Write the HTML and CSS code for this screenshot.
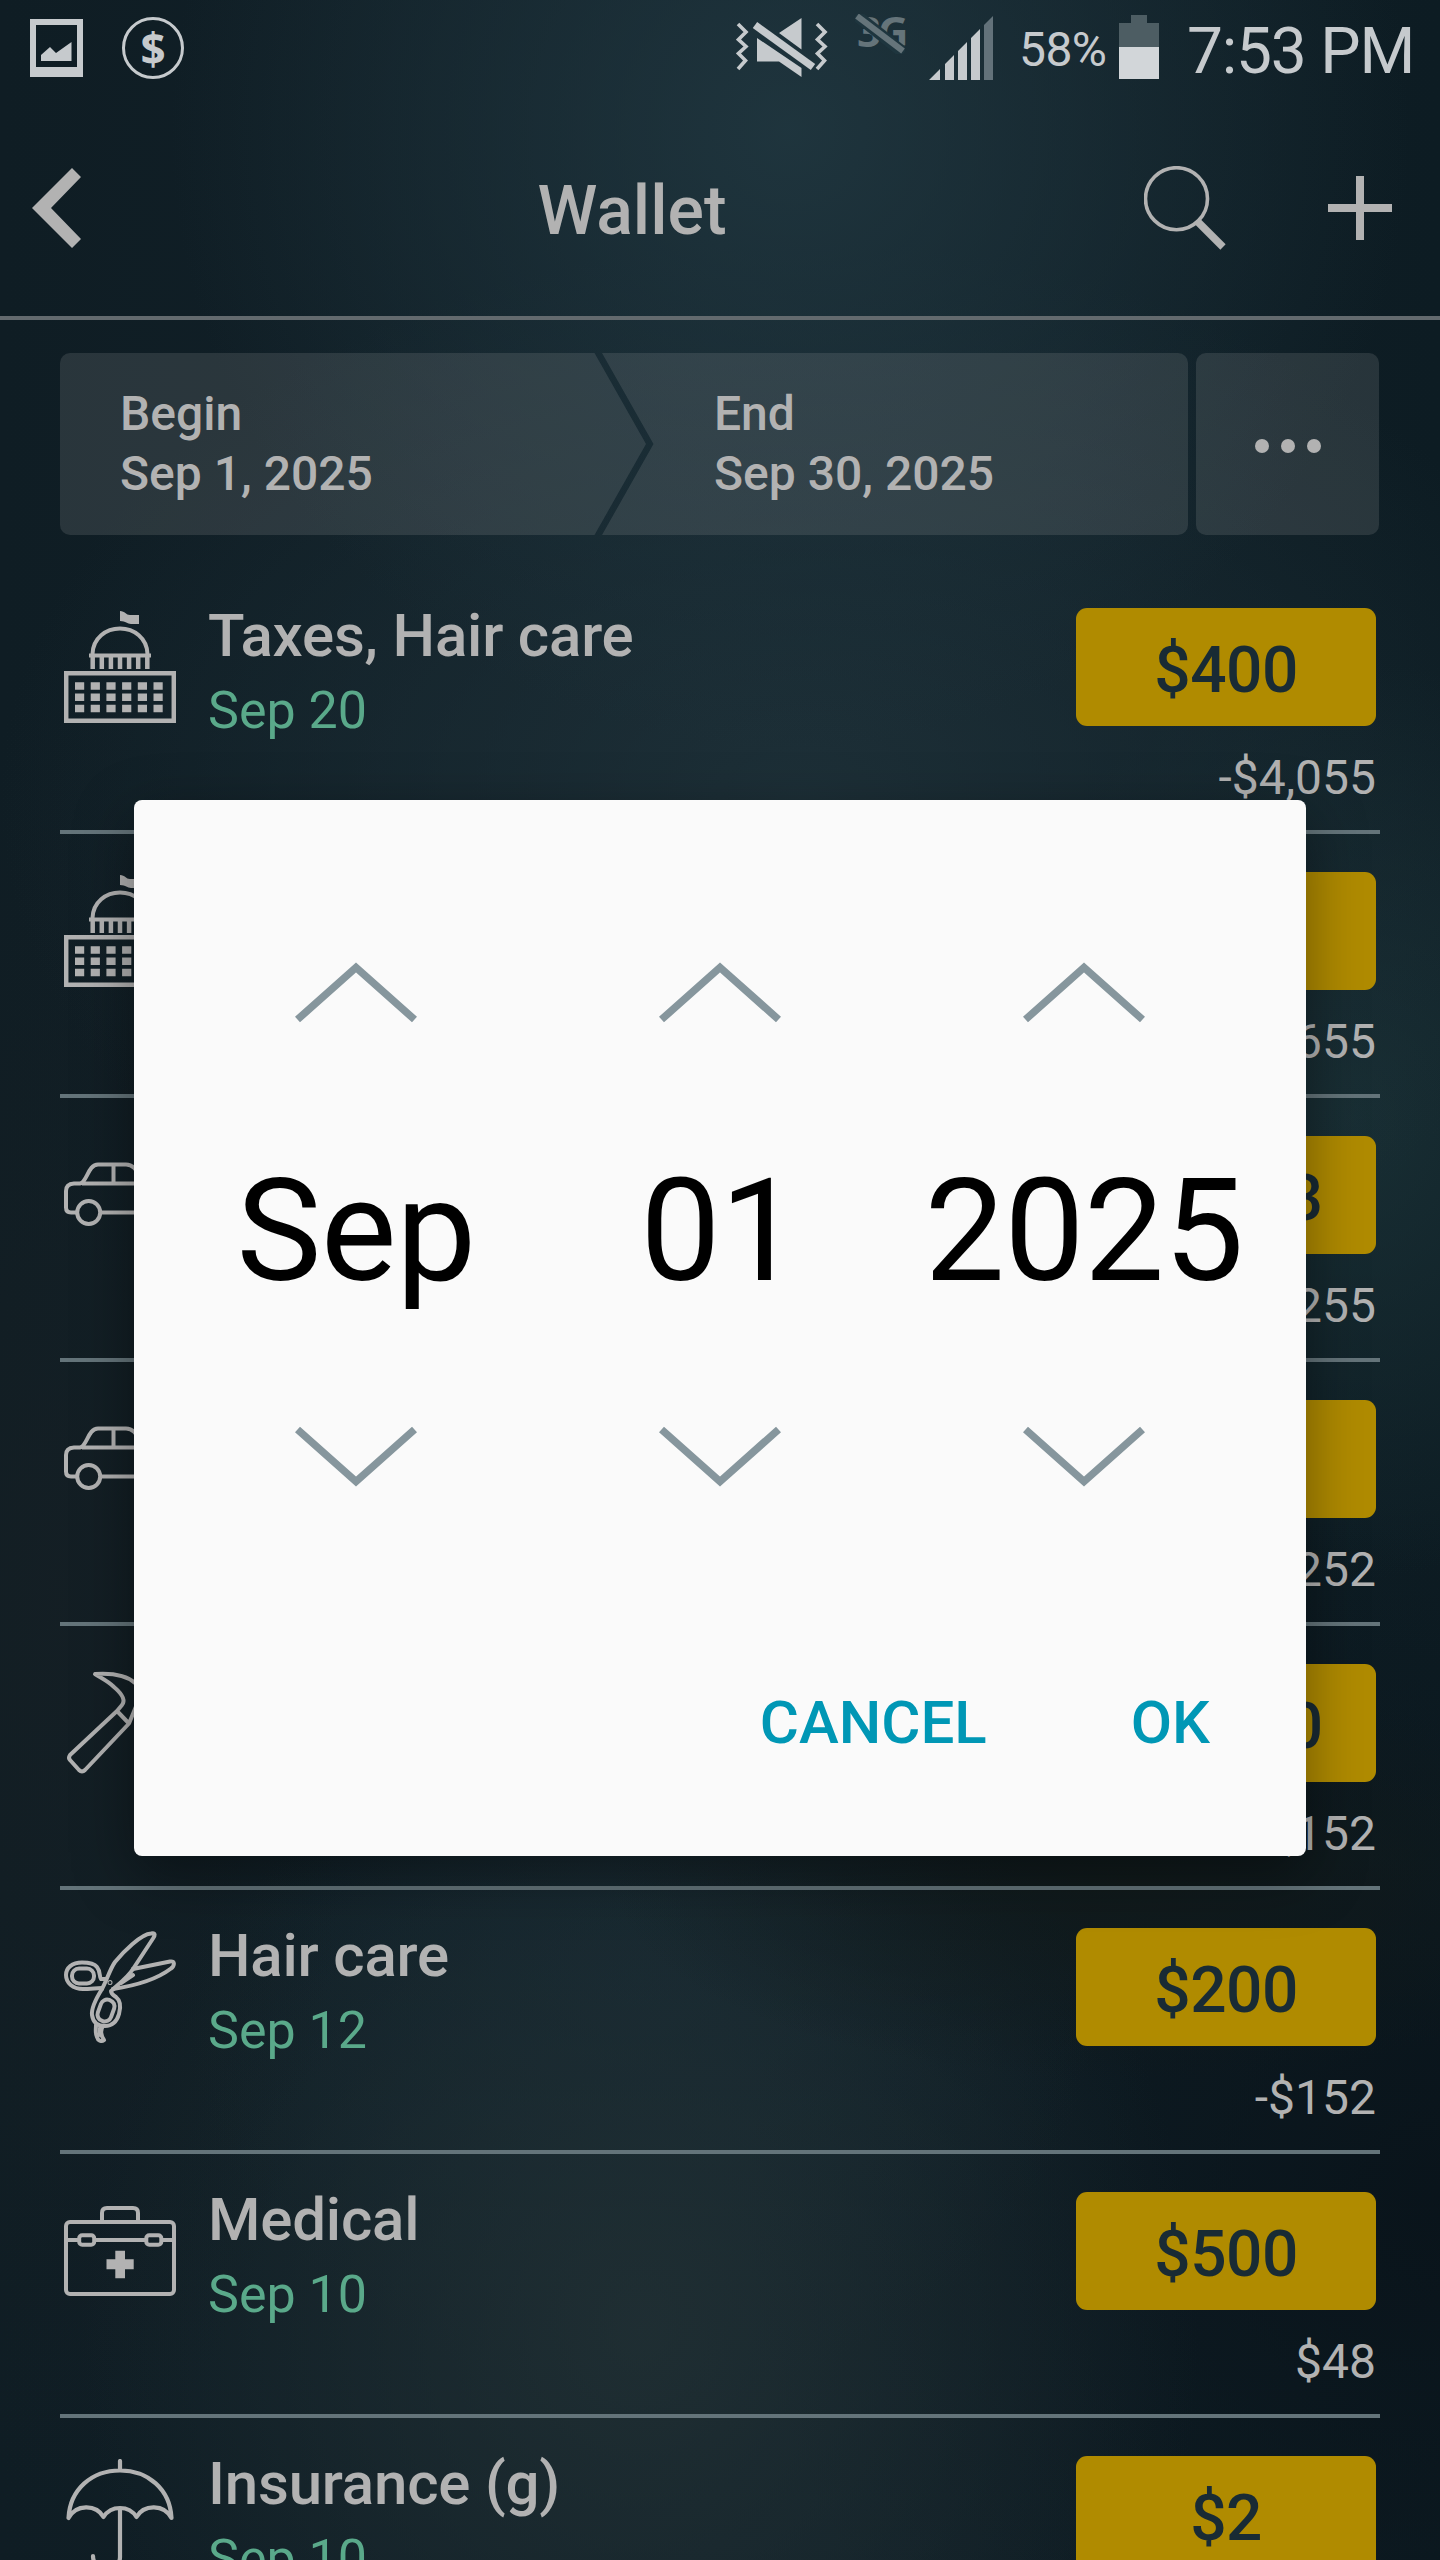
FILE: index.html
```html
<!DOCTYPE html>
<html lang="en">
<head>
<meta charset="utf-8">
<title>Wallet</title>
<link rel="stylesheet" href="styles.css">
</head>
<body>
<svg class="defs" aria-hidden="true">
  <symbol id="capitol" viewBox="0 0 112 112">
    <path fill="currentColor" d="M56 0c5 0 6 4 10 4h9v9h-8c-4 0-5-3-11-3z"/>
    <path fill="none" stroke="currentColor" stroke-width="4" d="M28.500 43C29 27 42 17.500 56 17.500S83 27 83.500 43M25 44.500h62"/>
    <path fill="none" stroke="currentColor" stroke-width="4.500" d="M28.700 44v14M37.800 44v14M46.900 44v14M56 44v14M65.100 44v14M74.200 44v14M83.300 44v14M2.200 62.200h107.600v47.600H2.200z"/>
    <path fill="none" stroke="currentColor" stroke-width="7.500" stroke-dasharray="9.200 6.500" d="M11 75h90M11 86.200h90M11 97.400h90"/>
  </symbol>
  <symbol id="car" viewBox="0 0 112 112">
    <g fill="none" stroke="currentColor" stroke-width="4" stroke-linejoin="round">
      <path d="M12 73.500H7q-5 0-5-5V52q0-7 8-7.500h6c7-1 8-19 18-19h28c11 0 13 14 20 19h18q10 1 10 9v15q0 5-5 5h-5M38 73.500h37M18 44.500h64M49.500 26v18"/>
      <circle cx="24.700" cy="73.500" r="11.500"/><circle cx="87.500" cy="73.500" r="11.500"/>
    </g>
  </symbol>
  <symbol id="hammer" viewBox="0 0 112 112">
    <path fill="none" stroke="currentColor" stroke-width="4" stroke-linejoin="round" d="M53 44L6 88q-2 3 0 5l9 10q3 3 6 0l44-46.500zM53 44l5-6c4-5-1-12-8-18-6-6-13-9-19-13 15-1 30 0 40 9l17 18 6-1 15 16-15 16-15-16 1-6-7-6-8 19.500"/>
  </symbol>
  <symbol id="scissors" viewBox="0 0 112 112">
    <g fill="none" stroke="currentColor" stroke-width="4" stroke-linecap="round" stroke-linejoin="round">
      <path d="M38 58C43 49 46 38 51 31 59 21 77 3 87 2.500c5-1 4 2 2 5L69 38c-5 8-13 14-20 20"/>
      <path d="M69 38L106 30.500c6-1 4 5 1 7C92 49 69 55 49 58M57 52l12-8"/>
      <path d="M42 48h-5c-2-2 0-7-4-12-3-4-9-4.500-15-4.500C8 31.500 2 37 2 44c0 8 7 14 17 14 7 0 14-1 19-1"/>
      <rect x="8" y="37.500" width="22" height="15" rx="7"/>
      <path d="M38 58C33 66 27 76 28 84c1 7 5 11 13 11 8 0 12-5 14-12s2-13-3-17c-3-2-5-3-5-6l4-3"/>
      <rect x="35" y="68.500" width="14" height="22" rx="6.500" transform="rotate(20 42 79.500)"/>
      <path d="M32 94c0 4-1 8 1 12 1 4 4 5 7 3-3-4-4-10-1-14M36 97v7"/>
      <circle cx="46" cy="51.500" r=".5"/>
    </g>
  </symbol>
  <symbol id="medkit" viewBox="0 0 112 112">
    <g fill="none" stroke="currentColor" stroke-width="4">
      <rect x="2" y="27" width="108" height="72" rx="4"/>
      <path d="M38 26v-8q0-5 5-5h26q5 0 5 5v8M2 45h12M31 45h50M98 45h12"/>
      <rect x="15.200" y="40.200" width="15" height="9.600" rx="3"/><rect x="82.300" y="40.200" width="15" height="9.600" rx="3"/>
    </g>
    <path fill="currentColor" d="M51.300 55.700h9.700v8.600h8.700v10H61v8.900h-9.700v-8.900h-8.800v-10h8.800z"/>
  </symbol>
  <symbol id="umbrella" viewBox="0 0 112 112">
    <path fill="none" stroke="currentColor" stroke-width="4.200" stroke-linecap="round" stroke-linejoin="round" d="M56 2v9M4.500 59C6 30 28 11.500 56 11.500S106 30 107.500 59C100 45 80 45 72.500 58 65 46 47 46 39.500 58 32 45 12 45 4.500 59zM56 49v49c0 16-27 16-27-1"/>
  </symbol>
  <symbol id="chevron" viewBox="0 0 124 62">
    <path fill="none" stroke="currentColor" stroke-width="7.500" d="M3.500 58.500L62 6.500l58.500 52"/>
  </symbol>
</svg>

<div class="screen">
  <div class="statusbar">
    <svg class="status-photo" width="53" height="58" viewBox="0 0 53 58"><path fill="currentColor" fill-rule="evenodd" d="M0 0h53v58H0zM6 6v42h41V6z"/><path fill="currentColor" d="M11 42v-6l9-8 6 6 15.500-11v19z"/></svg>
    <div class="coin">$</div>
    <div class="status-right">
      <svg class="mute" width="92" height="60" viewBox="0 0 92 60">
        <path fill="none" stroke="currentColor" stroke-width="3.600" d="M2 6l8 8-7.500 7.500 7.500 7-7.500 7 7 7L2 51M81 6l8 8-7.500 7.500 7.500 7-7.500 7 7 7L81 51"/>
        <path fill="none" stroke="currentColor" stroke-width="7.500" d="M19 7l58 42"/>
        <path fill="currentColor" d="M65.500 0v31.500L43 15zM21 20l44.500 30v9L43 43.500H21z"/>
      </svg>
      <div class="network">3G<svg width="50" height="40" viewBox="0 0 50 40"><path stroke="#1e353e" stroke-width="12" d="M1 1l48 38"/><path stroke="currentColor" stroke-width="6" d="M2 2l46 35"/></svg></div>
      <svg class="signal" width="65" height="64" viewBox="0 0 65 64"><path fill="currentColor" d="M0 64l11-11v11zM16 48l9-9v25h-9zM29 35l9-9v38h-9zM42 22l9-9v51h-9z"/><path fill="#63727a" d="M55 9l9-9v64h-9z"/></svg>
      <span class="percent">58%</span>
      <svg class="battery" width="40" height="64" viewBox="0 0 40 64"><path fill="#4d5d63" d="M12 0h16v8h12v24H0V8h12z"/><path fill="#d2d6d9" d="M0 32h40v32H0z"/></svg>
      <span class="clock">7:53 PM</span>
    </div>
  </div>

  <header class="appbar">
    <svg class="back" width="50" height="80" viewBox="0 0 50 80"><path fill="currentColor" d="M40 0l9 9-30 31 30 31-9 9L0 40z"/></svg>
    <h1>Wallet</h1>
    <svg class="search" width="82" height="84" viewBox="0 0 82 84"><ellipse cx="32.500" cy="32.700" rx="31" ry="31" fill="none" stroke="currentColor" stroke-width="3.600"/><path stroke="currentColor" stroke-width="7.500" d="M54 56l25 25"/></svg>
    <svg class="add" width="64" height="64" viewBox="0 0 64 64"><path stroke="currentColor" stroke-width="8" d="M32 0v64M0 32h64"/></svg>
  </header>

  <div class="range">
    <div class="segment begin"><span>Begin</span><span>Sep 1, 2025</span></div>
    <div class="segment end"><span>End</span><span>Sep 30, 2025</span></div>
    <div class="more"><i></i><i></i><i></i></div>
  </div>

  <div class="list">
    <div class="row"><svg class="icon"><use href="#capitol"/></svg><div class="info"><b>Taxes, Hair care</b><span>Sep 20</span></div><div class="money"><div class="pill">$400</div><div class="balance">-$4,055</div></div></div>
    <div class="row"><svg class="icon"><use href="#capitol"/></svg><div class="info"></div><div class="money"><div class="pill"></div><div class="balance">-$3,655</div></div></div>
    <div class="row"><svg class="icon"><use href="#car"/></svg><div class="info"></div><div class="money"><div class="pill">$3,003</div><div class="balance">-$3,255</div></div></div>
    <div class="row"><svg class="icon"><use href="#car"/></svg><div class="info"></div><div class="money"><div class="pill"></div><div class="balance">-$3,252</div></div></div>
    <div class="row"><svg class="icon"><use href="#hammer"/></svg><div class="info"></div><div class="money"><div class="pill">$3,000</div><div class="balance">-$3,152</div></div></div>
    <div class="row"><svg class="icon"><use href="#scissors"/></svg><div class="info"><b>Hair care</b><span>Sep 12</span></div><div class="money"><div class="pill">$200</div><div class="balance">-$152</div></div></div>
    <div class="row"><svg class="icon"><use href="#medkit"/></svg><div class="info"><b>Medical</b><span>Sep 10</span></div><div class="money"><div class="pill">$500</div><div class="balance">$48</div></div></div>
    <div class="row"><svg class="icon"><use href="#umbrella"/></svg><div class="info"><b>Insurance (g)</b><span>Sep 10</span></div><div class="money"><div class="pill">$2</div></div></div>
  </div>

  <div class="dialog">
    <div class="pickers">
      <div class="picker"><svg class="chev"><use href="#chevron"/></svg><span>Sep</span><svg class="chev down"><use href="#chevron"/></svg></div>
      <div class="picker"><svg class="chev"><use href="#chevron"/></svg><span>01</span><svg class="chev down"><use href="#chevron"/></svg></div>
      <div class="picker"><svg class="chev"><use href="#chevron"/></svg><span>2025</span><svg class="chev down"><use href="#chevron"/></svg></div>
    </div>
    <div class="actions"><span>CANCEL</span><span>OK</span></div>
  </div>
</div>
</body>
</html>
```
FILE: styles.css
```css
* { box-sizing: border-box; }
body { margin: 0; font-family: Roboto, "Liberation Sans", sans-serif; }
svg { display: block; flex: none; }
.defs { position: absolute; width: 0; height: 0; }

.screen {
  position: relative;
  width: 1440px;
  height: 2560px;
  overflow: hidden;
  color: #b2b2b2;
  background:
    radial-gradient(ellipse 620px 620px at 790px 130px, rgba(33, 56, 65, .85), rgba(33, 56, 65, 0)),
    radial-gradient(ellipse 800px 560px at 800px 800px, rgba(31, 50, 58, .85), rgba(31, 50, 58, 0)),
    radial-gradient(ellipse 380px 460px at 1350px 1120px, rgba(28, 52, 57, .75), rgba(28, 52, 57, 0)),
    radial-gradient(ellipse 520px 200px at 1130px 1880px, rgba(17, 26, 27, .95), rgba(17, 26, 27, 0)),
    radial-gradient(ellipse 300px 900px at 60px 1600px, rgba(21, 31, 36, .8), rgba(21, 31, 36, 0)),
    radial-gradient(ellipse 560px 620px at 640px 2330px, rgba(33, 48, 52, .85), rgba(33, 48, 52, 0)),
    radial-gradient(ellipse 460px 420px at 640px 1980px, rgba(26, 46, 56, .5), rgba(26, 46, 56, 0)),
    radial-gradient(ellipse 700px 700px at 1440px 2200px, rgba(9, 19, 26, .9), rgba(9, 19, 26, 0)),
    linear-gradient(90deg, #0f1d24, #122129 50%, #0d1c23);
}

.statusbar { display: flex; height: 96px; padding-left: 30px; color: #c6cacd; }
.status-photo { margin-top: 19px; }
.coin {
  width: 62px; height: 62px; margin: 17px 0 0 39px;
  border: 3px solid; border-radius: 50%;
  font: bold 44px/57px "Open Sans", sans-serif; text-align: center;
}
.status-right { display: flex; flex: 1; margin-left: 552px; }
.mute { margin-top: 18px; }
.network {
  position: relative; width: 54px; height: 46px; margin: 14px 0 0 29px;
  font: bold 42px/34px "Open Sans", sans-serif; letter-spacing: -3px; color: #65747a;
}
.network svg { position: absolute; left: -2px; top: 0; }
.signal { margin: 16px 0 0 18px; }
.percent { margin-left: 25px; width: 100px; font-size: 48px; line-height: 99px; letter-spacing: -.6px; }
.battery { margin: 15px 0 0 0; }
.clock { margin-left: 28px; font-size: 64px; line-height: 103px; letter-spacing: -1.200px; white-space: nowrap; }

.appbar { display: flex; height: 224px; padding-left: 32px; border-bottom: 4px solid #636a6e; }
.back { margin-top: 72px; }
h1 { width: 976px; margin: 0 0 0 62px; font-size: 68px; font-weight: 500; line-height: 231px; text-align: center; }
.search { margin: 70px 0 0 23.500px; }
.add { margin: 80px 0 0 102.500px; }

.range { display: flex; padding: 33px 60px 0; height: 215px; font-size: 48px; font-weight: 500; line-height: 60px; }
.segment, .more { height: 182px; background: rgba(178, 178, 178, .16); }
.segment { display: flex; flex-direction: column; padding: 31px 0 0; }
.begin { width: 586px; padding-left: 60px; border-radius: 10px 0 0 10px; clip-path: polygon(0 0, 534.500px 0, 586px 50%, 534.500px 100%, 0 100%); }
.end { width: 586px; margin-left: -44px; padding-left: 112px; border-radius: 0 10px 10px 0; clip-path: polygon(0 0, 100% 0, 100% 100%, 0 100%, 51.500px 50%); }
.more { display: flex; align-items: center; justify-content: center; gap: 12px; width: 183px; margin-left: 8px; padding-top: 4px; border-radius: 10px; }
.more i { width: 14px; height: 14px; border-radius: 50%; background: #b2b2b2; }

.list { padding: 35px 60px 0; }
.row { display: flex; height: 264px; border-bottom: 4px solid #64747a; }
.icon { width: 112px; height: 112px; margin: 41px 32px 0 4px; }
.info { display: flex; flex: 1; flex-direction: column; padding-top: 28px; line-height: 75px; white-space: nowrap; }
.info b { font-size: 60px; font-weight: 500; letter-spacing: -.200px; }
.info span { font-size: 52px; color: #5aa98a; }
.money { width: 304px; padding: 38px 4px 0 0; }
.pill { height: 118px; border-radius: 11px; background: #b08b00; color: #192b34; font-size: 64px; font-weight: 500; line-height: 126px; letter-spacing: -.500px; text-align: center; }
.balance { margin-top: 22px; font-size: 48px; line-height: 60px; text-align: right; }

.dialog {
  position: absolute; left: 134px; top: 800px; width: 1172px; height: 1056px;
  padding: 161px 40px 0; border-radius: 8px;
  background: #fafafa; color: #000;
  box-shadow: 0 18px 60px rgba(0, 0, 0, .4);
}
.pickers { display: grid; grid-template-columns: repeat(3, 1fr); }
.picker { display: flex; flex-direction: column; align-items: center; font-size: 143px; line-height: 170px; letter-spacing: -.600px; }
.chev { width: 124px; height: 62px; margin-bottom: 123px; color: #86969d; }
.down { margin: 110px 0 0; transform: scaleY(-1); }
.actions { display: flex; justify-content: flex-end; gap: 144px; margin: 195px 56px 0 0; font-size: 60px; font-weight: 500; line-height: 80px; color: #0097b5; }
```
